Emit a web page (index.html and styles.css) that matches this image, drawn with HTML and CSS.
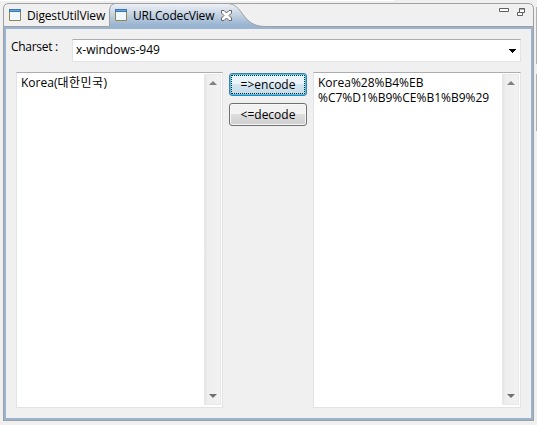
FILE: index.html
```html
<!DOCTYPE html>
<html lang="ko">
<head>
<meta charset="utf-8">
<title>URLCodecView</title>
<link rel="stylesheet" href="styles.css">
</head>
<body>
<div class="view">
  <header class="tabs">
    <svg class="tab-shape" width="531" height="26" viewBox="0 0 531 26">
      <defs><linearGradient id="blue" x1="0" y1="0" x2="0" y2="1"><stop offset="0" stop-color="#f0f2f6"/><stop offset=".85" stop-color="#99b4d1"/></linearGradient></defs>
      <path d="M.5 26V6Q.5 .5 6 .5H525Q530.5 .5 530.5 6V26" fill="#f0f0f0" stroke="#a0a0a0"/>
      <path d="M106.500 26V7Q107 .5 113 .5H224C241 .5 238 23.500 262 23.500V26Z" fill="url(#blue)"/>
      <path d="M0 23.500H106.500V7Q107 .5 113 .5H224C241 .5 238 23.500 262 23.500H531" fill="none" stroke="#a0a0a0"/>
    </svg>
    <div class="tab first"><svg class="page" width="12" height="12" viewBox="0 0 12 12"><path d="M.5 .5h11v11H.5z" fill="#eef8ff" stroke="#94834f"/><path d="M0 0h12v3H0z" fill="#3a75b5"/><path d="M1 1h10v1H1z" fill="#6fa7dd"/></svg><span>DigestUtilView</span></div>
    <div class="tab active"><svg class="page" width="12" height="12" viewBox="0 0 12 12"><path d="M.5 .5h11v11H.5z" fill="#eef8ff" stroke="#94834f"/><path d="M0 0h12v3H0z" fill="#3a75b5"/><path d="M1 1h10v1H1z" fill="#6fa7dd"/></svg><span>URLCodecView</span>
      <svg class="close" width="11" height="11" viewBox="0 0 11 11"><path d="M.5 .5h2.500l2.500 2.500 2.500-2.500h2.500v2.500L8 5.500l2.500 2.500v2.500H8L5.500 8 3 10.500H.5V8L3 5.500.5 3z" fill="#fff" stroke="#666"/></svg></div>
    <div class="tools">
      <svg width="10" height="4" viewBox="0 0 10 4"><path d="M.5 .5h9v3h-9z" fill="#fff" stroke="#606060"/></svg>
      <svg width="8" height="8" viewBox="0 0 8 8"><path d="M2.500 .5h5v4h-5z" fill="#fff" stroke="#606060"/><path d="M2 1h6M.5 4.500h5v3h-5z" fill="#fff" stroke="#606060"/></svg>
    </div>
  </header>
  <main class="content">
    <div class="charset"><label>Charset :</label><div class="combo"><span>x-windows-949</span><svg width="7" height="4" viewBox="0 0 7 4" shape-rendering="crispEdges"><path d="M0 0h7v1H6v1H5v1H4v1H3V3H2V2H1V1H0z"/></svg></div></div>
    <div class="editors">
      <section class="area input"><p>Korea(<span class="hangul">대한민국</span>)</p><div class="scroll"><svg width="8" height="4" viewBox="0 0 8 4"><path d="M0 4 4 0l4 4z" fill="#808080"/></svg><svg width="8" height="4" viewBox="0 0 8 4"><path d="M0 0h8L4 4z" fill="#707070"/></svg></div></section>
      <div class="actions"><button class="encode">=&gt;encode</button><button>&lt;=decode</button></div>
      <section class="area output"><p>Korea%28%B4%EB<br>%C7%D1%B9%CE%B1%B9%29</p><div class="scroll"><svg width="8" height="4" viewBox="0 0 8 4"><path d="M0 4 4 0l4 4z" fill="#808080"/></svg><svg width="8" height="4" viewBox="0 0 8 4"><path d="M0 0h8L4 4z" fill="#707070"/></svg></div></section>
    </div>
  </main>
</div>
<div class="neighbor"></div>
</body>
</html>
```
FILE: styles.css
```css
* { box-sizing: border-box; }
body { margin: 0; width: 537px; height: 425px; padding: 3px 0 4px 3px; display: flex; gap: 2px; overflow: hidden; background: linear-gradient(#fff, #fff) 0 0 / 394px 1px no-repeat #f0f0f0; color: #000; font: 12px/15px "Open Sans", "Noto Sans CJK KR", sans-serif; }
svg { display: block; flex: none; }
span, label { white-space: nowrap; }
.view { width: 531px; height: 418px; display: flex; flex-direction: column; }
.tabs { position: relative; height: 24px; display: flex; align-items: center; }
.tab-shape { position: absolute; left: 0; top: 0; z-index: -1; }
.tab { display: flex; align-items: center; height: 24px; }
.tab span { letter-spacing: -.16px; }
.first { width: 106px; padding-left: 6px; gap: 6px; }
.active { padding-left: 6px; gap: 6px; }
.close { margin-left: 1px; }
.tools { margin-left: auto; padding: 5px 9px 0 0; align-self: flex-start; display: flex; gap: 8px; }
.content { flex: 1; border: solid #a0a0a0; border-width: 0 1px 1px; box-shadow: inset 0 0 0 2px #99b4d1; padding: 12px; }
.charset { display: flex; height: 23px; margin-left: -5px; }
.charset label { width: 61px; letter-spacing: -.3px; }
.combo { flex: 1; background: #fff; border: 1px solid #e2e3ea; border-top-color: #abadb3; display: flex; align-items: center; justify-content: space-between; padding: 0 4px 0 3px; }
.combo span { margin-top: -2px; }
.editors { display: flex; margin-top: 10px; height: 336px; }
.area { border: 1px solid #e2e3ea; border-top-color: #abadb3; background: #fff; display: flex; justify-content: space-between; }
.input { width: 207px; }
.output { width: 208px; }
.area p { margin: 2px 0 0 4px; white-space: nowrap; }
.hangul { letter-spacing: .45px; }
.scroll { width: 17px; margin: 1px 1px 2px 0; background: linear-gradient(90deg, #e3e3e3, #eee 15%, #f2f2f2); border: 1px solid #e8e8e8; display: flex; flex-direction: column; align-items: center; justify-content: space-between; padding: 6px 0 6px; }
.actions { width: 90px; padding: 1px 6px; display: flex; flex-direction: column; gap: 7px; }
button { height: 23px; padding: 0; border: 1px solid #707070; border-radius: 3px; background: linear-gradient(#f2f2f2 0 48%, #ddd 50%, #cfcfcf); box-shadow: inset 0 0 0 1px #f8f8f8; font: inherit; color: #000; }
.encode { border-color: #3c7fb1; background: linear-gradient(#eaf3f9 0 48%, #d5e6f1 50%, #c4dae8); box-shadow: inset 0 0 0 1px #3fc9f2; outline: 1px dotted #222; outline-offset: -3px; }
.neighbor { width: 1px; height: 57px; margin-top: 4px; background: #b0b0b0; box-shadow: 0 67px #b0b0b0; }
```
